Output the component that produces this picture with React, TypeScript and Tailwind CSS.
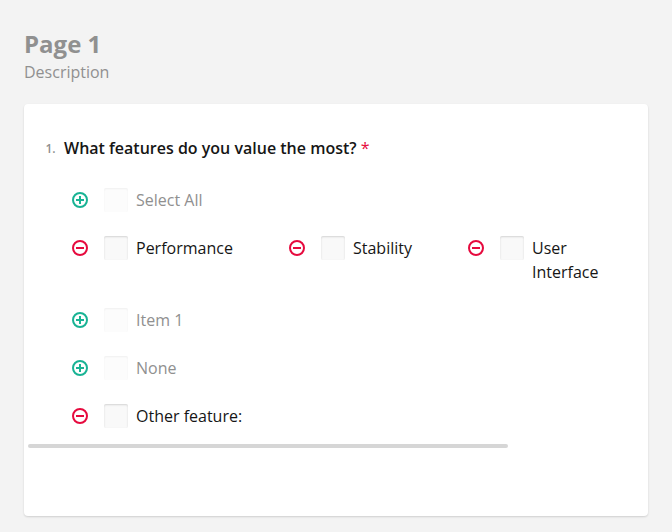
import React from "react";

function ItemIcon({ add }: { add: boolean }) {
  return (
    <svg width="16" height="16" viewBox="0 0 16 16" className={"mt-1 shrink-0 " + (add ? "text-[#19b394]" : "text-[#e60a3e]")} fill="none" stroke="currentColor" strokeWidth="2">
      <circle cx="8" cy="8" r="7" />
      <path d={add ? "M4 8H12M8 4V12" : "M4 8H12"} />
    </svg>
  );
}

function Choice({ label, add = false, labelClass = "" }: { label: string; add?: boolean; labelClass?: string }) {
  return (
    <div className="flex items-start">
      <ItemIcon add={add} />
      <div className="ml-4 flex">
        <span className={"size-6 shrink-0 rounded-[2px] bg-[#f9f9f9] shadow-[inset_0_1px_2px_rgba(0,0,0,0.15)] " + (add ? "opacity-35" : "")} />
        <span className={"ml-2 " + (add ? "text-[#909090] " : "") + labelClass}>{label}</span>
      </div>
    </div>
  );
}

export default function App() {
  return (
    <main className="h-[532px] w-[672px] overflow-hidden bg-[#f3f3f3] px-6 pt-8 font-['Open_Sans',sans-serif] text-base leading-6 text-[#161616]">
      <h1 className="h-7 text-2xl leading-6 font-bold text-[#909090]">Page 1</h1>
      <p className="h-11 text-[#909090]">Description</p>
      <section className="h-[412px] rounded bg-white pt-8 shadow-[0_1px_2px_rgba(0,0,0,0.15)]">
        <h2 className="flex h-6 pl-[21.5px] font-semibold">
          <span className="w-[18.5px] pt-px text-xs leading-6 text-[#909090]">1.</span>
          <span>What features do you value the most? <span className="font-normal text-[#e60a3e]">*</span></span>
        </h2>
        <div className="flex flex-col gap-6 pt-7 pl-12">
          <Choice add label="Select All" />
          <div className="flex h-12">
            <div className="w-[217px]"><Choice label="Performance" /></div>
            <div className="w-[179px]"><Choice label="Stability" /></div>
            <Choice label="User Interface" labelClass="w-20" />
          </div>
          <Choice add label="Item 1" />
          <Choice add label="None" />
          <Choice label="Other feature:" />
        </div>
        <div className="mt-4 ml-1 h-1 w-[480px] rounded-sm bg-[#d6d6d6]" />
      </section>
    </main>
  );
}
